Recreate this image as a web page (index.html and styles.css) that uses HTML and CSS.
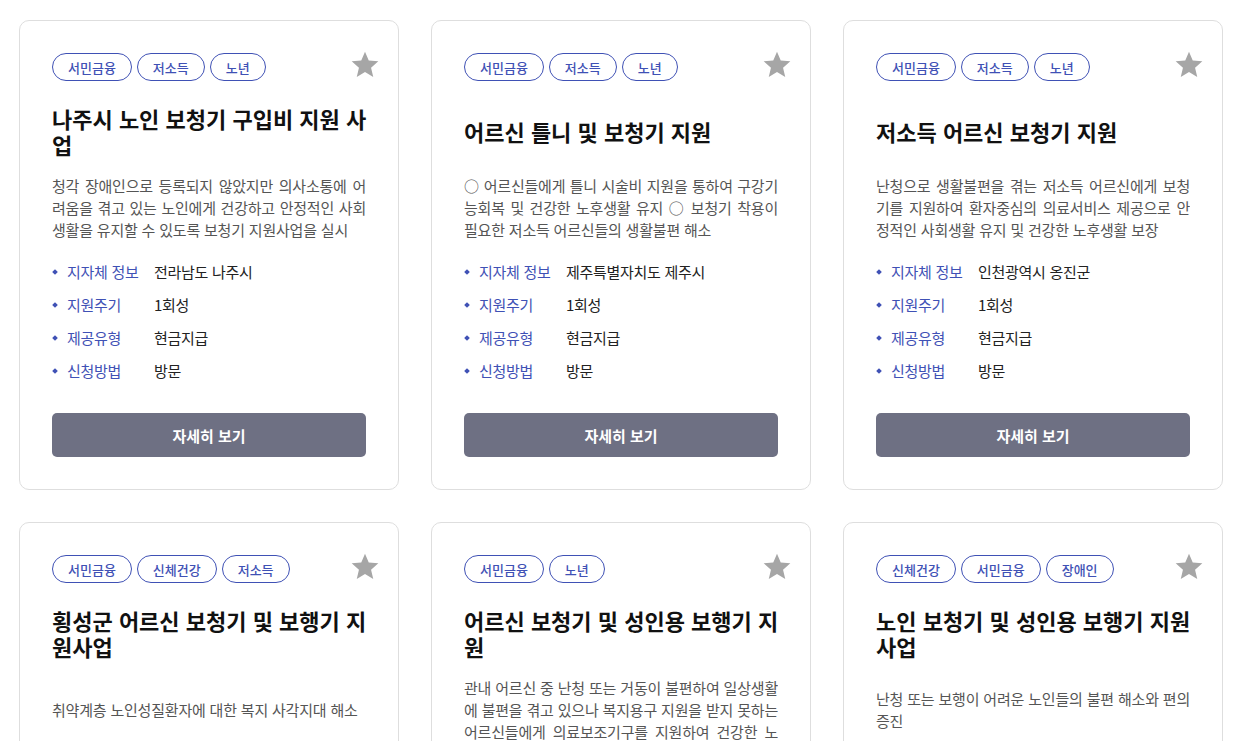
FILE: index.html
```html
<!DOCTYPE html>
<html lang="ko">
  <head>
    <meta charset="UTF-8" />
    <meta name="viewport" content="width=device-width, initial-scale=1.0" />
    <title>복지 정책 목록</title>
    <link rel="stylesheet" href="styles.css">
  </head>
  <body>
    <main class="policy-grid">
      <!-- 1 -->
      <article class="policy-card">
        <button class="star-btn" aria-label="즐겨찾기">
          <svg width="32" height="32" viewBox="0 0 24 24" fill="currentColor"><path d="M12 17.27L18.18 21l-1.64-7.03L22 9.24l-7.19-.61L12 2 9.19 8.63 2 9.24l5.46 4.73L5.82 21z"/></svg>
        </button>
        <div class="tag-list">
          <span class="tag">서민금융</span>
          <span class="tag">저소득</span>
          <span class="tag">노년</span>
        </div>
        <h3 class="policy-title"><span>나주시 노인 보청기 구입비 지원 사업</span></h3>
        <div class="policy-desc">
          <p>청각 장애인으로 등록되지 않았지만 의사소통에 어려움을 겪고 있는 노인에게 건강하고 안정적인 사회생활을 유지할 수 있도록 보청기 지원사업을 실시</p>
        </div>
        <ul class="info-list">
          <li><span class="info-label">지자체 정보</span><span class="info-value">전라남도 나주시</span></li>
          <li><span class="info-label">지원주기</span><span class="info-value">1회성</span></li>
          <li><span class="info-label">제공유형</span><span class="info-value">현금지급</span></li>
          <li><span class="info-label">신청방법</span><span class="info-value">방문</span></li>
        </ul>
        <button class="detail-btn">자세히 보기</button>
      </article>

      <!-- 2 -->
      <article class="policy-card">
        <button class="star-btn" aria-label="즐겨찾기">
          <svg width="32" height="32" viewBox="0 0 24 24" fill="currentColor"><path d="M12 17.27L18.18 21l-1.64-7.03L22 9.24l-7.19-.61L12 2 9.19 8.63 2 9.24l5.46 4.73L5.82 21z"/></svg>
        </button>
        <div class="tag-list">
          <span class="tag">서민금융</span>
          <span class="tag">저소득</span>
          <span class="tag">노년</span>
        </div>
        <h3 class="policy-title"><span>어르신 틀니 및 보청기 지원</span></h3>
        <div class="policy-desc">
          <p>○ 어르신들에게 틀니 시술비 지원을 통하여 구강기능회복 및 건강한 노후생활 유지 ○ 보청기 착용이 필요한 저소득 어르신들의 생활불편 해소</p>
        </div>
        <ul class="info-list">
          <li><span class="info-label">지자체 정보</span><span class="info-value">제주특별자치도 제주시</span></li>
          <li><span class="info-label">지원주기</span><span class="info-value">1회성</span></li>
          <li><span class="info-label">제공유형</span><span class="info-value">현금지급</span></li>
          <li><span class="info-label">신청방법</span><span class="info-value">방문</span></li>
        </ul>
        <button class="detail-btn">자세히 보기</button>
      </article>

      <!-- 3 -->
      <article class="policy-card">
        <button class="star-btn" aria-label="즐겨찾기">
          <svg width="32" height="32" viewBox="0 0 24 24" fill="currentColor"><path d="M12 17.27L18.18 21l-1.64-7.03L22 9.24l-7.19-.61L12 2 9.19 8.63 2 9.24l5.46 4.73L5.82 21z"/></svg>
        </button>
        <div class="tag-list">
          <span class="tag">서민금융</span>
          <span class="tag">저소득</span>
          <span class="tag">노년</span>
        </div>
        <h3 class="policy-title"><span>저소득 어르신 보청기 지원</span></h3>
        <div class="policy-desc">
          <p>난청으로 생활불편을 겪는 저소득 어르신에게 보청기를 지원하여 환자중심의 의료서비스 제공으로 안정적인 사회생활 유지 및 건강한 노후생활 보장</p>
        </div>
        <ul class="info-list">
          <li><span class="info-label">지자체 정보</span><span class="info-value">인천광역시 옹진군</span></li>
          <li><span class="info-label">지원주기</span><span class="info-value">1회성</span></li>
          <li><span class="info-label">제공유형</span><span class="info-value">현금지급</span></li>
          <li><span class="info-label">신청방법</span><span class="info-value">방문</span></li>
        </ul>
        <button class="detail-btn">자세히 보기</button>
      </article>

      <!-- 4 -->
      <article class="policy-card">
        <button class="star-btn" aria-label="즐겨찾기">
          <svg width="32" height="32" viewBox="0 0 24 24" fill="currentColor"><path d="M12 17.27L18.18 21l-1.64-7.03L22 9.24l-7.19-.61L12 2 9.19 8.63 2 9.24l5.46 4.73L5.82 21z"/></svg>
        </button>
        <div class="tag-list">
          <span class="tag">서민금융</span>
          <span class="tag">신체건강</span>
          <span class="tag">저소득</span>
        </div>
        <h3 class="policy-title"><span>횡성군 어르신 보청기 및 보행기 지원사업</span></h3>
        <div class="policy-desc">
          <p>취약계층 노인성질환자에 대한 복지 사각지대 해소</p>
        </div>
        <ul class="info-list">
          <li><span class="info-label">지자체 정보</span><span class="info-value">강원도 횡성군</span></li>
          <li><span class="info-label">지원주기</span><span class="info-value">1회성</span></li>
          <li><span class="info-label">제공유형</span><span class="info-value">현물지급</span></li>
          <li><span class="info-label">신청방법</span><span class="info-value">방문</span></li>
        </ul>
        <button class="detail-btn">자세히 보기</button>
      </article>

      <!-- 5 -->
      <article class="policy-card">
        <button class="star-btn" aria-label="즐겨찾기">
          <svg width="32" height="32" viewBox="0 0 24 24" fill="currentColor"><path d="M12 17.27L18.18 21l-1.64-7.03L22 9.24l-7.19-.61L12 2 9.19 8.63 2 9.24l5.46 4.73L5.82 21z"/></svg>
        </button>
        <div class="tag-list">
          <span class="tag">서민금융</span>
          <span class="tag">노년</span>
        </div>
        <h3 class="policy-title"><span>어르신 보청기 및 성인용 보행기 지원</span></h3>
        <div class="policy-desc">
          <p>관내 어르신 중 난청 또는 거동이 불편하여 일상생활에 불편을 겪고 있으나 복지용구 지원을 받지 못하는 어르신들에게 의료보조기구를 지원하여 건강한 노후생활 보장</p>
        </div>
        <ul class="info-list">
          <li><span class="info-label">지자체 정보</span><span class="info-value">경상북도 영천시</span></li>
          <li><span class="info-label">지원주기</span><span class="info-value">1회성</span></li>
          <li><span class="info-label">제공유형</span><span class="info-value">현물지급</span></li>
          <li><span class="info-label">신청방법</span><span class="info-value">방문</span></li>
        </ul>
        <button class="detail-btn">자세히 보기</button>
      </article>

      <!-- 6 -->
      <article class="policy-card">
        <button class="star-btn" aria-label="즐겨찾기">
          <svg width="32" height="32" viewBox="0 0 24 24" fill="currentColor"><path d="M12 17.27L18.18 21l-1.64-7.03L22 9.24l-7.19-.61L12 2 9.19 8.63 2 9.24l5.46 4.73L5.82 21z"/></svg>
        </button>
        <div class="tag-list">
          <span class="tag">신체건강</span>
          <span class="tag">서민금융</span>
          <span class="tag">장애인</span>
        </div>
        <h3 class="policy-title"><span>노인 보청기 및 성인용 보행기 지원사업</span></h3>
        <div class="policy-desc">
          <p>난청 또는 보행이 어려운 노인들의 불편 해소와 편의증진</p>
        </div>
        <ul class="info-list">
          <li><span class="info-label">지자체 정보</span><span class="info-value">경상남도 함안군</span></li>
          <li><span class="info-label">지원주기</span><span class="info-value">1회성</span></li>
          <li><span class="info-label">제공유형</span><span class="info-value">현물지급</span></li>
          <li><span class="info-label">신청방법</span><span class="info-value">방문</span></li>
        </ul>
        <button class="detail-btn">자세히 보기</button>
      </article>
    </main>
  </body>
</html>
```

FILE: styles.css
```css
body {
  margin: 0;
  font-family: "Noto Sans CJK KR", "Noto Sans", sans-serif;
  background: #fff;
  color: #222;
}
.policy-grid {
  display: grid;
  grid-template-columns: repeat(3, 1fr);
  gap: 32px;
  padding: 20px 18px 20px 19px;
}
.policy-card {
  position: relative;
  display: flex;
  flex-direction: column;
  background: white;
  border: 1px solid #dedede;
  border-radius: 10px;
  padding: 32px 30px 32px 32px;
}
.star-btn {
  position: absolute;
  top: 28px;
  right: 17px;
  padding: 0;
  border: none;
  background: none;
  color: #a6a6a6;
  cursor: pointer;
  line-height: 0;
}
.tag-list {
  display: flex;
  gap: 5px;
}
.tag {
  display: inline-flex;
  align-items: center;
  height: 28px;
  box-sizing: border-box;
  padding: 0 15px;
  border: 1px solid #3f51b5;
  border-radius: 14px;
  color: #3f51b5;
  font-size: 13px;
  font-weight: 500;
}
.policy-title {
  display: flex;
  align-items: center;
  height: 52px;
  margin: 24px 0 0;
  font-size: 22px;
  line-height: 26px;
  font-weight: 700;
  color: #111;
}
.policy-desc {
  display: flex;
  align-items: center;
  height: 66px;
  margin-top: 18px;
}
.policy-desc p {
  width: 314px;
  margin: 0;
  max-height: 66px;
  overflow: hidden;
  font-size: 15px;
  line-height: 22px;
  letter-spacing: -0.2px;
  color: #555;
  text-align: justify;
}
.info-list {
  list-style: none;
  margin: 14px 0 0;
  padding: 0;
}
.info-list li {
  display: flex;
  align-items: center;
  height: 33px;
  font-size: 15px;
  letter-spacing: -0.3px;
}
.info-list li::before {
  content: "";
  width: 4px;
  height: 4px;
  margin: 0 10px 0 1px;
  background: #3f51b5;
  transform: rotate(45deg);
}
.info-label {
  width: 87px;
  color: #3f51b5;
}
.info-value {
  color: #222;
}
.detail-btn {
  height: 44px;
  width: calc(100% - 2px);
  margin-top: 26px;
  border: none;
  border-radius: 5px;
  background: #6e7083;
  color: white;
  font-family: inherit;
  font-size: 15px;
  font-weight: 700;
  cursor: pointer;
}
```
